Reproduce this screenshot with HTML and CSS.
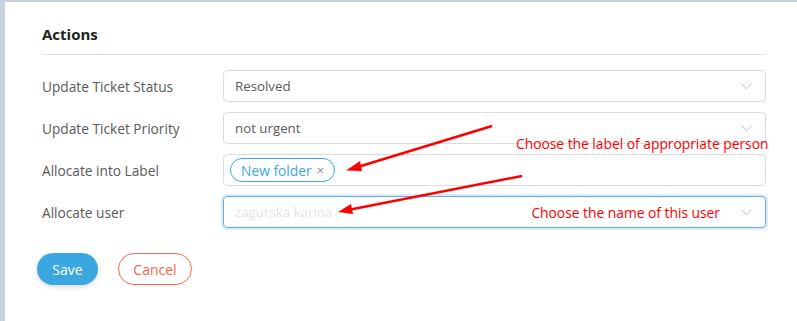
FILE: index.html
```html
<!DOCTYPE html>
<html>
<head>
<meta charset="utf-8">
<link rel="stylesheet" href="styles.css">
</head>
<body>
<div class="page">
  <div class="card">
    <h2 class="title">Actions</h2>
    <div class="rows">
      <div class="row">
        <div class="label">Update Ticket Status</div>
        <div class="field">
          <span class="value">Resolved</span>
          <svg class="chev" width="11" height="7" viewBox="0 0 11 7"><path d="M0.5 0.5 L5.5 6 L10.5 0.5" fill="none" stroke="#c4c4c4" stroke-width="1"/></svg>
        </div>
      </div>
      <div class="row">
        <div class="label">Update Ticket Priority</div>
        <div class="field">
          <span class="value">not urgent</span>
          <svg class="chev" width="11" height="7" viewBox="0 0 11 7"><path d="M0.5 0.5 L5.5 6 L10.5 0.5" fill="none" stroke="#c4c4c4" stroke-width="1"/></svg>
        </div>
      </div>
      <div class="row">
        <div class="label">Allocate into Label</div>
        <div class="field tags">
          <span class="tag">New folder <span class="x">×</span></span>
        </div>
      </div>
      <div class="row">
        <div class="label">Allocate user</div>
        <div class="field focus">
          <span class="value blurred">zagurska karina</span>
          <span class="note">Choose the name of this user</span>
          <svg class="chev" width="11" height="7" viewBox="0 0 11 7"><path d="M0.5 0.5 L5.5 6 L10.5 0.5" fill="none" stroke="#c4c4c4" stroke-width="1"/></svg>
        </div>
      </div>
    </div>
    <div class="buttons">
      <button class="btn save">Save</button>
      <button class="btn cancel">Cancel</button>
    </div>
    <span class="note note1">Choose the label of appropriate person</span>
    <svg class="arrows" width="797" height="321" viewBox="0 0 797 321">
      <line x1="492" y1="126" x2="356" y2="167.5" stroke="#f00" stroke-width="2.5"/>
      <polygon points="346,170.5 360,161 362,171" fill="#f00"/>
      <line x1="522" y1="176" x2="348" y2="210" stroke="#f00" stroke-width="2.5"/>
      <polygon points="338,212 351,204 353,214" fill="#f00"/>
    </svg>
  </div>
</div>
</body>
</html>
```
FILE: styles.css
```css
html, body {
  margin: 0;
  padding: 0;
}
body {
  width: 797px;
  height: 321px;
  overflow: hidden;
  background: #c9d1e1;
  font-family: "Open Sans", "Noto Sans", sans-serif;
}
.page {
  padding: 2px 0 0 5px;
  height: 319px;
}
.card {
  position: relative;
  background: #fff;
  height: 100%;
  padding: 0 31px 0 37px;
  box-sizing: border-box;
}
.title {
  margin: 0;
  padding-top: 22px;
  font-size: 15px;
  font-weight: 700;
  color: #222;
  line-height: 20px;
  padding-bottom: 10px;
  border-bottom: 1px solid #e0e0e0;
}
.rows {
  display: flex;
  flex-direction: column;
  gap: 10px;
  margin-top: 15px;
}
.row {
  display: flex;
  align-items: center;
  height: 32px;
}
.label {
  width: 181px;
  font-size: 13.7px;
  color: #595959;
}
.field {
  flex: 1;
  height: 32px;
  box-sizing: border-box;
  border: 1px solid #dcdcdc;
  border-radius: 4px;
  display: flex;
  align-items: center;
  padding: 0 13px 0 11px;
  font-size: 13.3px;
  color: #5a5a5a;
}
.value {
  flex: 1;
}
.chev {
  display: block;
}
.tags {
  padding-left: 6px;
}
.tag {
  border: 1px solid #3ea6e2;
  border-radius: 13px;
  height: 24px;
  box-sizing: border-box;
  padding: 0 10px;
  color: #3ea6e2;
  display: flex;
  align-items: center;
  font-size: 13.8px;
}
.tag .x {
  color: #888;
  margin-left: 5px;
  font-size: 13px;
}
.focus {
  border-color: #62aee8;
  box-shadow: 0 0 0 2px #dcecfa;
}
.blurred {
  color: #e3e3e3;
  filter: blur(0.6px);
}
.note {
  color: #f00;
  font-size: 13.8px;
  margin-right: 21px;
}
.note1 {
  position: absolute;
  left: 511px;
  top: 132px;
}
.buttons {
  display: flex;
  gap: 20px;
  margin-top: 25px;
  margin-left: -5px;
}
.btn {
  height: 32px;
  border-radius: 16px;
  font-family: inherit;
  font-size: 14px;
  padding: 0;
  cursor: pointer;
}
.save {
  width: 61px;
  background: #3ba7e0;
  color: #fff;
  border: none;
  box-shadow: 0 2px 5px rgba(0,0,0,0.15);
}
.cancel {
  width: 74px;
  background: #fff;
  border: 1px solid #fb6a4c;
  color: #f5634a;
}
.arrows {
  position: absolute;
  left: -5px;
  top: -2px;
  pointer-events: none;
}
```
